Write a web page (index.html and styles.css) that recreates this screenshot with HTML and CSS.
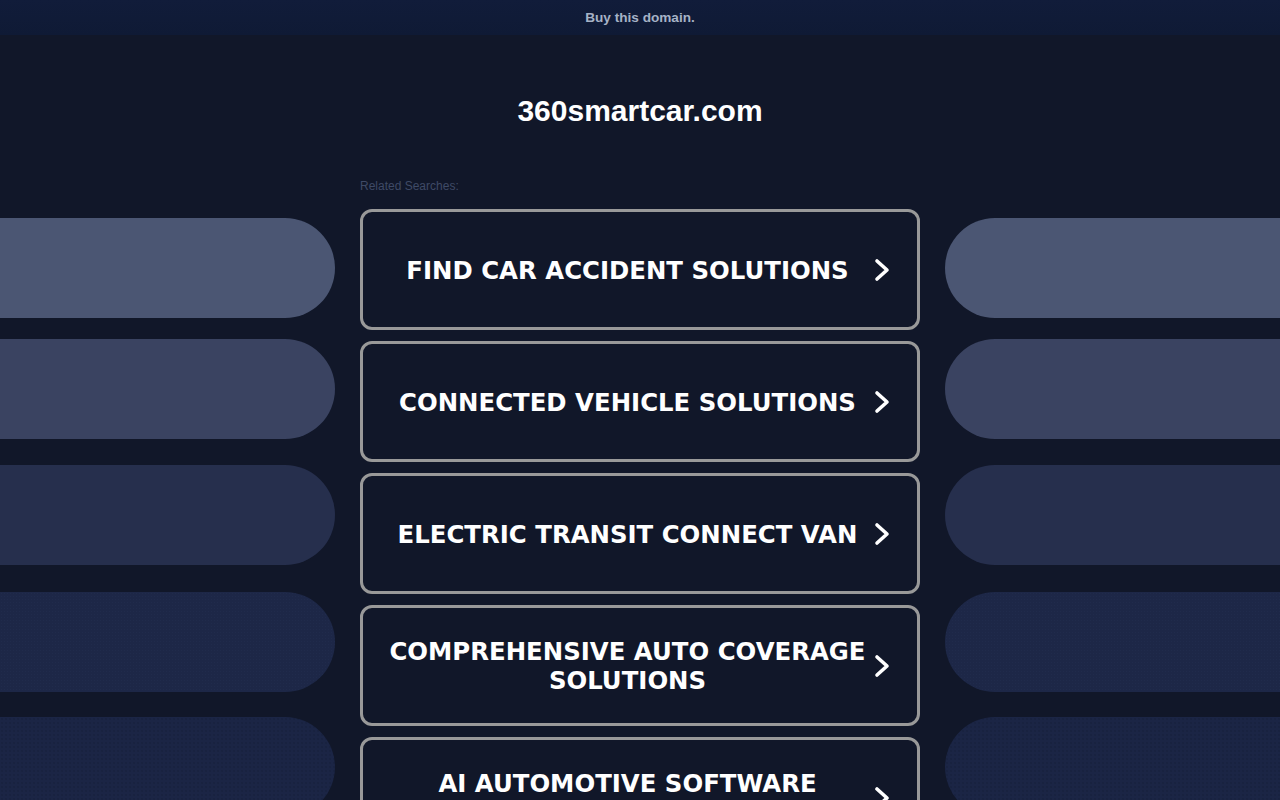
FILE: index.html
```html
<!DOCTYPE html>
<html lang="en">
<head>
<meta charset="utf-8">
<title>360smartcar.com</title>
<link rel="stylesheet" href="styles.css">
</head>
<body>
<div class="topbar"><a class="buy" href="#">Buy this domain.</a></div>
<main class="layout">
  <div class="side side-left">
    <div class="pill p1"></div>
    <div class="pill p2"></div>
    <div class="pill p3"></div>
    <div class="pill p4"></div>
    <div class="pill p5"></div>
  </div>
  <div class="center">
    <h1 class="title">360smartcar.com</h1>
    <div class="related">Related Searches:</div>
    <div class="links">
      <a class="link" href="#"><span class="label">FIND CAR ACCIDENT SOLUTIONS</span><svg class="chev" viewBox="0 0 16 24" width="16" height="24"><polyline points="3,3 13,12 3,21" fill="none" stroke="#fff" stroke-width="3.6" stroke-linecap="round" stroke-linejoin="round"/></svg></a>
      <a class="link" href="#"><span class="label">CONNECTED VEHICLE SOLUTIONS</span><svg class="chev" viewBox="0 0 16 24" width="16" height="24"><polyline points="3,3 13,12 3,21" fill="none" stroke="#fff" stroke-width="3.6" stroke-linecap="round" stroke-linejoin="round"/></svg></a>
      <a class="link" href="#"><span class="label">ELECTRIC TRANSIT CONNECT VAN</span><svg class="chev" viewBox="0 0 16 24" width="16" height="24"><polyline points="3,3 13,12 3,21" fill="none" stroke="#fff" stroke-width="3.6" stroke-linecap="round" stroke-linejoin="round"/></svg></a>
      <a class="link" href="#"><span class="label">COMPREHENSIVE AUTO COVERAGE SOLUTIONS</span><svg class="chev" viewBox="0 0 16 24" width="16" height="24"><polyline points="3,3 13,12 3,21" fill="none" stroke="#fff" stroke-width="3.6" stroke-linecap="round" stroke-linejoin="round"/></svg></a>
      <a class="link" href="#"><span class="label">AI AUTOMOTIVE SOFTWARE SOLUTIONS</span><svg class="chev" viewBox="0 0 16 24" width="16" height="24"><polyline points="3,3 13,12 3,21" fill="none" stroke="#fff" stroke-width="3.6" stroke-linecap="round" stroke-linejoin="round"/></svg></a>
    </div>
  </div>
  <div class="side side-right">
    <div class="pill p1"></div>
    <div class="pill p2"></div>
    <div class="pill p3"></div>
    <div class="pill p4"></div>
    <div class="pill p5"></div>
  </div>
</main>
</body>
</html>
```

FILE: styles.css
```css
html, body {
  margin: 0;
  padding: 0;
  height: 100%;
  overflow: hidden;
}
body {
  background: #111729;
  font-family: "Liberation Sans", Arial, sans-serif;
  color: #fff;
}
.topbar {
  height: 35px;
  background: linear-gradient(#111c3a, #0f1a35);
  display: flex;
  align-items: center;
  justify-content: center;
}
.buy {
  color: #a6b2c6;
  font-weight: bold;
  font-size: 13.6px;
  text-decoration: none;
  line-height: 16px;
  margin-top: 1px;
}
.layout {
  display: grid;
  grid-template-columns: 335px 560px 335px;
  column-gap: 25px;
}
.side {
  display: flex;
  flex-direction: column;
  padding-top: 183px;
}
.pill {
  height: 100px;
  flex: none;
}
.side-left .pill { border-radius: 0 50px 50px 0; }
.side-right .pill { border-radius: 50px 0 0 50px; }
.pill.p2 { margin-top: 21px; }
.pill.p3 { margin-top: 26px; }
.pill.p4 { margin-top: 27px; }
.pill.p5 { margin-top: 25px; }
.p1 { background: #4b5673; }
.p2 { background: #3a4361; }
.p3 { background: #262f4d; }
.p4 {
  background-color: #1d2747;
  background-image: radial-gradient(rgba(60, 75, 115, 0.12) 0.6px, transparent 0.9px);
  background-size: 3px 3px;
}
.p5 {
  background-color: #1b2545;
  background-image: radial-gradient(rgba(10, 15, 35, 0.22) 0.6px, transparent 0.9px);
  background-size: 4px 4px;
}
.center {
  display: flex;
  flex-direction: column;
}
.title {
  margin: 58px 0 0;
  font-size: 30px;
  line-height: 36px;
  font-weight: bold;
  text-align: center;
  color: #fff;
}
.related {
  margin-top: 50px;
  font-size: 12px;
  line-height: 14px;
  color: #3f4a66;
}
.links {
  margin-top: 16px;
  display: flex;
  flex-direction: column;
  gap: 11px;
}
.link {
  height: 121px;
  box-sizing: border-box;
  border: 3px solid #999999;
  border-radius: 12px;
  display: flex;
  align-items: center;
  padding: 1px 27px 0 23px;
  text-decoration: none;
  color: #fff;
}
.label {
  flex: 1;
  text-align: center;
  font-family: "DejaVu Sans", Verdana, sans-serif;
  font-weight: bold;
  font-size: 24.4px;
  line-height: 29px;
}
.chev {
  flex: none;
  margin-left: 5px;
  display: block;
}
```
